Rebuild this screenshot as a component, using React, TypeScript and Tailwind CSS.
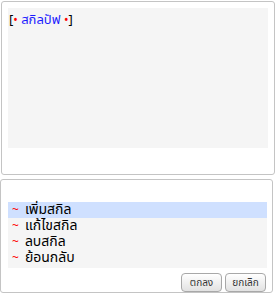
import React from 'react'

const ITEMS = ['เพิ่มสกิล', 'แก้ไขสกิล', 'ลบสกิล', 'ย้อนกลับ']

export default function App() {
  return (
    <div className="w-[276px] h-[295px] bg-white flex flex-col gap-[4px] p-[1px] text-[13px] leading-[16px]" style={{ fontFamily: 'Tahoma, "Noto Sans Thai", "Noto Sans", sans-serif' }}>
      {/* top panel */}
      <div className="h-[174px] w-[274px] border border-[#c4c4c4] rounded-[3px] px-[6px] pt-[6px]">
        <div className="h-[140px] bg-[#f5f5f5] px-[1px] pt-[4px] text-[13px]">
          <span className="text-black">[</span>
          <span className="text-[#ff0000] text-[12px]">•</span>
          <span className="text-[#1a1aff]"> สกิลปัฟ </span>
          <span className="text-[#ff0000] text-[12px]">•</span>
          <span className="text-black">]</span>
        </div>
      </div>

      {/* bottom panel */}
      <div className="h-[114px] w-[273px] -ml-[1px] border border-[#c4c4c4] rounded-[3px] pl-[7px] pr-[5px] pt-[22px] flex flex-col">
        <div className="h-[66px] bg-[#f5f5f5] flex flex-col">
          {ITEMS.map((label, i) => (
            <div key={label} className={`h-[16px] flex items-center gap-[6px] pl-[4px] ${i === 0 ? 'bg-[#cfe0ff]' : ''}`}>
              <span className="text-[#ff0000] text-[12px] leading-[14px]">~</span>
              <span className="text-black text-[14px] leading-[14px]">{label}</span>
            </div>
          ))}
        </div>
        <div className="flex justify-end gap-[3px] mt-[5px] pr-[1px]">
          {['ตกลง', 'ยกเลิก'].map((b) => (
            <button key={b} className="w-[41px] h-[19px] rounded-[4px] border border-[#a8a8a8] bg-gradient-to-b from-white to-[#e2e2e2] text-[10px] text-[#333] leading-none">
              {b}
            </button>
          ))}
        </div>
      </div>
    </div>
  )
}
